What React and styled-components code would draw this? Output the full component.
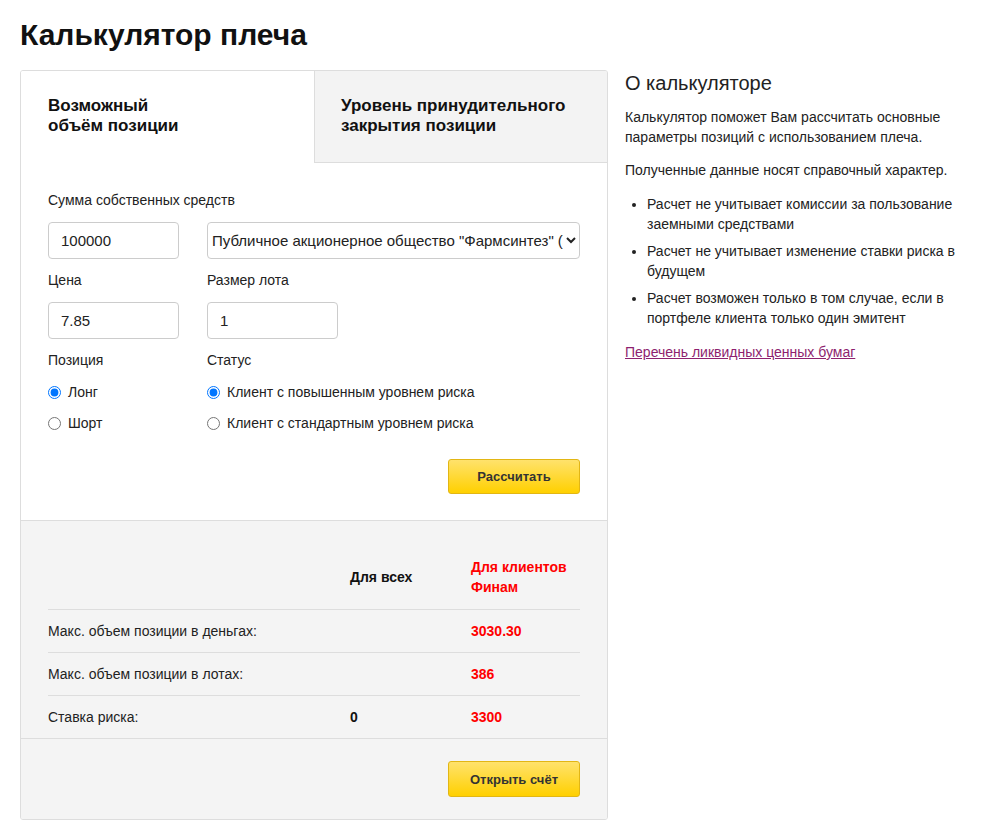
import React from 'react'
import styled, { createGlobalStyle } from 'styled-components'

const GlobalStyle = createGlobalStyle`
  * { box-sizing: border-box; }
  body {
    margin: 0;
    background: #fff;
    color: #222;
    font-family: "Liberation Sans", Arial, sans-serif;
  }
`

const Page = styled.div`
  width: 1008px;
  padding: 17px 20px 17px;
`

const Title = styled.h1`
  margin: 0 0 17px;
  font-size: 30px;
  line-height: 36px;
  font-weight: 700;
  color: #111;
`

const Columns = styled.div`
  display: flex;
  align-items: flex-start;
  gap: 17px;
`

const Card = styled.div`
  flex: 0 0 588px;
  border: 1px solid #ddd;
  border-radius: 3px;
  overflow: hidden;
  background: #fff;
`

const Tabs = styled.div`
  display: grid;
  grid-template-columns: 1fr 1fr;
`

const Tab = styled.div`
  padding: 25px 27px 26px ${p => (p.$active ? '27px' : '26px')};
  font-size: 17px;
  line-height: 20px;
  font-weight: 700;
  color: #111;
  background: ${p => (p.$active ? '#fff' : '#f3f3f3')};
  border-left: ${p => (p.$active ? 'none' : '1px solid #ddd')};
  border-bottom: ${p => (p.$active ? 'none' : '1px solid #ddd')};
  cursor: pointer;
`

const Form = styled.div`
  padding: 29px 27px 26px;
`

const FormGrid = styled.div`
  display: grid;
  grid-template-columns: 131px 1fr;
  column-gap: 28px;
`

const Label = styled.div`
  grid-column: ${p => (p.$span ? '1 / -1' : 'auto')};
  margin-bottom: 14px;
  font-size: 14px;
  line-height: 16px;
  color: #222;
`

const TextInput = styled.input`
  width: 131px;
  height: 37px;
  margin: 0 0 13px;
  padding: 0 12px;
  border: 1px solid #ccc;
  border-radius: 4px;
  font-family: "Liberation Sans", Arial, sans-serif;
  font-size: 15px;
  color: #222;
  background: #fff;
`

const Select = styled.select`
  width: 100%;
  height: 37px;
  margin: 0 0 13px;
  padding: 0;
  border: 1px solid #ccc;
  border-radius: 4px;
  font-family: "Liberation Sans", Arial, sans-serif;
  font-size: 15px;
  color: #222;
  background: #fff;
`

const RadioList = styled.div`
  display: flex;
  flex-direction: column;
  gap: 11px;
`

const RadioLabel = styled.label`
  display: flex;
  align-items: center;
  height: 20px;
  font-size: 14px;
  color: #222;
  cursor: pointer;

  input {
    width: 13px;
    height: 13px;
    margin: 0 7px 0 0;
  }
`

const Actions = styled.div`
  display: flex;
  justify-content: flex-end;
  margin-top: ${p => p.$top || '0px'};
`

const YellowButton = styled.button`
  width: 132px;
  height: ${p => p.$h || '35px'};
  border: 1px solid #e2b614;
  border-radius: 3px;
  background: linear-gradient(to bottom, #ffe26c, #ffd000);
  font-family: "Liberation Sans", Arial, sans-serif;
  font-size: 13px;
  font-weight: 700;
  color: #333;
  cursor: pointer;
`

const Results = styled.div`
  background: #f4f4f4;
  border-top: 1px solid #ddd;
`

const ResultsBody = styled.div`
  padding: 24px 27px 0;
  border-bottom: 1px solid #ddd;
`

const Table = styled.table`
  width: 100%;
  border-collapse: collapse;
  table-layout: fixed;
`

const HeadCell = styled.th`
  width: ${p => p.$w || 'auto'};
  padding: 12px 0;
  text-align: left;
  vertical-align: middle;
  font-size: 14px;
  line-height: 20px;
  font-weight: 700;
  color: ${p => (p.$red ? '#ff0000' : '#111')};
`

const Cell = styled.td`
  padding: 11px 0;
  border-top: 1px solid #ddd;
  font-size: 14px;
  line-height: 20px;
  font-weight: ${p => (p.$bold ? 700 : 400)};
  color: ${p => (p.$red ? '#ff0000' : p.$bold ? '#111' : '#222')};
`

const Footer = styled.div`
  padding: 22px 27px 22px;
`

const Aside = styled.div`
  flex: 1;
`

const AsideTitle = styled.h2`
  margin: 0 0 11px;
  font-size: 20px;
  line-height: 26px;
  font-weight: 400;
  color: #222;
`

const Text = styled.p`
  margin: 0 0 13px;
  font-size: 14px;
  line-height: 20px;
  color: #222;
`

const Notes = styled.ul`
  margin: 14px 0;
  padding-left: 22px;

  li {
    margin-bottom: 7px;
    font-size: 14px;
    line-height: 20px;
    color: #222;
  }
`

const DocLink = styled.a`
  font-size: 14px;
  line-height: 20px;
  color: #8e1f6f;
  text-decoration: underline;
`

const rows = [
  { label: 'Макс. объем позиции в деньгах:', all: '', finam: '3030.30' },
  { label: 'Макс. объем позиции в лотах:', all: '', finam: '386' },
  { label: 'Ставка риска:', all: '0', finam: '3300' },
]

export default function App() {
  return (
    <Page>
      <GlobalStyle />
      <Title>Калькулятор плеча</Title>
      <Columns>
        <Card>
          <Tabs>
            <Tab $active>Возможный<br />объём позиции</Tab>
            <Tab>Уровень принудительного закрытия позиции</Tab>
          </Tabs>

          <Form>
            <FormGrid>
              <Label $span>Сумма собственных средств</Label>
              <TextInput defaultValue="100000" />
              <Select defaultValue="pfs">
                <option value="pfs">Публичное акционерное общество "Фармсинтез" (ао)</option>
              </Select>

              <Label>Цена</Label>
              <Label>Размер лота</Label>
              <TextInput defaultValue="7.85" />
              <TextInput defaultValue="1" />

              <Label>Позиция</Label>
              <Label>Статус</Label>
              <RadioList>
                <RadioLabel><input type="radio" name="pos" defaultChecked />Лонг</RadioLabel>
                <RadioLabel><input type="radio" name="pos" />Шорт</RadioLabel>
              </RadioList>
              <RadioList>
                <RadioLabel><input type="radio" name="status" defaultChecked />Клиент с повышенным уровнем риска</RadioLabel>
                <RadioLabel><input type="radio" name="status" />Клиент с стандартным уровнем риска</RadioLabel>
              </RadioList>
            </FormGrid>
            <Actions $top="26px">
              <YellowButton>Рассчитать</YellowButton>
            </Actions>
          </Form>

          <Results>
            <ResultsBody>
              <Table>
                <thead>
                  <tr>
                    <HeadCell $w="302px"></HeadCell>
                    <HeadCell $w="121px">Для всех</HeadCell>
                    <HeadCell $red>Для клиентов Финам</HeadCell>
                  </tr>
                </thead>
                <tbody>
                  {rows.map(r => (
                    <tr key={r.label}>
                      <Cell>{r.label}</Cell>
                      <Cell $bold>{r.all}</Cell>
                      <Cell $bold $red>{r.finam}</Cell>
                    </tr>
                  ))}
                </tbody>
              </Table>
            </ResultsBody>
            <Footer>
              <Actions>
                <YellowButton $h="36px">Открыть счёт</YellowButton>
              </Actions>
            </Footer>
          </Results>
        </Card>

        <Aside>
          <AsideTitle>О калькуляторе</AsideTitle>
          <Text>Калькулятор поможет Вам рассчитать основные параметры позиций с использованием плеча.</Text>
          <Text>Полученные данные носят справочный характер.</Text>
          <Notes>
            <li>Расчет не учитывает комиссии за пользование заемными средствами</li>
            <li>Расчет не учитывает изменение ставки риска в будущем</li>
            <li>Расчет возможен только в том случае, если в портфеле клиента только один эмитент</li>
          </Notes>
          <DocLink href="#">Перечень ликвидных ценных бумаг</DocLink>
        </Aside>
      </Columns>
    </Page>
  )
}
